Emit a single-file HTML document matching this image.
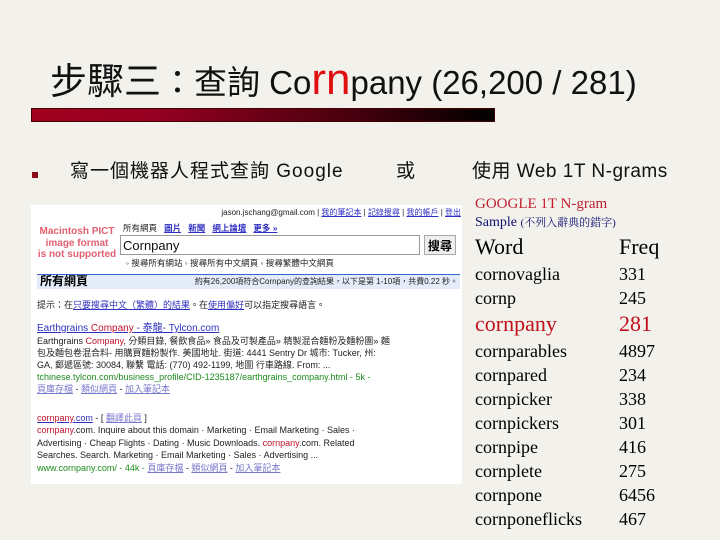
<!DOCTYPE html>
<html><head><meta charset="utf-8"><style>
*{margin:0;padding:0}
body{width:720px;height:540px;background:#f2f1ec;position:relative;overflow:hidden;font-family:"Liberation Sans","Noto Sans CJK TC",sans-serif}
.a{position:absolute;white-space:nowrap}
.s{font-family:"Liberation Serif","Noto Serif CJK SC",serif;color:#000}
.g{font-size:9px;color:#222;line-height:12px}
.lk{color:#3030c0;text-decoration:underline}
.lk2{color:#7777cc;text-decoration:underline}
.gr{color:#1c8a1c}
.rd{color:#c0102a}
</style></head><body>
<div class="a" style="left:50px;top:58px;font-size:33px;line-height:44px;color:#111"><span style="font-size:37px">步驟三</span>：查詢 Co<span style="color:#e01010;font-size:44px">rn</span>pany (26,200 / 281)</div>
<div class="a" style="left:31px;top:108px;width:462px;height:12px;background:linear-gradient(90deg,#a0001e 0%,#980022 25%,#500010 65%,#000 100%);border:1px solid #400"></div>
<div class="a" style="left:32px;top:172px;width:6px;height:6px;background:#8a0a1a"></div>
<div class="a" style="left:70px;top:161px;font-size:19px;letter-spacing:1px;line-height:22px;color:#111">寫一個機器人程式查詢 Google</div>
<div class="a" style="left:396px;top:161px;font-size:19px;line-height:22px;color:#111">或</div>
<div class="a" style="left:472px;top:161px;font-size:19px;letter-spacing:0.5px;line-height:22px;color:#111">使用 Web 1T N-grams</div>

<div class="a s" style="left:475px;top:194px;font-size:15px;line-height:20px;color:#c02030">GOOGLE 1T N-gram</div>
<div class="a s" style="left:475px;top:214px;font-size:14px;line-height:18px;color:#101070">Sample <span style="font-size:11px">(不列入辭典的錯字)</span></div>
<div class="a s" style="left:475px;top:233px;font-size:22px;line-height:28px">Word</div>
<div class="a s" style="left:619px;top:233px;font-size:22px;line-height:28px">Freq</div>
<div class="a s" style="left:475px;top:262px;font-size:18px;line-height:24px">cornovaglia<br>cornp</div>
<div class="a s" style="left:619px;top:262px;font-size:18px;line-height:24px">331<br>245</div>
<div class="a s" style="left:475px;top:311px;font-size:22px;line-height:26px;color:#c0101a">cornpany</div>
<div class="a s" style="left:619px;top:311px;font-size:22px;line-height:26px;color:#c0101a">281</div>
<div class="a s" style="left:475px;top:339px;font-size:18px;line-height:24px">cornparables<br>cornpared<br>cornpicker<br>cornpickers<br>cornpipe<br>cornplete<br>cornpone<br>cornponeflicks</div>
<div class="a s" style="left:619px;top:339px;font-size:18px;line-height:24px">4897<br>234<br>338<br>301<br>416<br>275<br>6456<br>467</div>

<div class="a" style="left:31px;top:205px;width:431px;height:279px;background:#fff"></div>
<div class="a g" style="right:259px;top:207px;font-size:8px">jason.jschang@gmail.com | <span class="lk">我的筆記本</span> | <span class="lk">記錄搜尋</span> | <span class="lk">我的帳戶</span> | <span class="lk">登出</span></div>
<div class="a" style="left:33px;top:226px;width:88px;text-align:center;font-size:10px;font-weight:bold;line-height:11.5px;color:#e06070">Macintosh PICT<br>image format<br>is not supported</div>
<div class="a g" style="left:123px;top:222px;font-size:8.5px">所有網頁 &nbsp; <b class="lk">圖片</b> &nbsp; <b class="lk">新聞</b> &nbsp; <b class="lk">網上論壇</b> &nbsp; <b class="lk">更多 »</b></div>
<div class="a" style="left:120px;top:235px;width:300px;height:20px;border:1px solid #999;background:#fff;font-size:13px;line-height:20px;color:#111;padding-left:2px;box-sizing:border-box">Cornpany</div>
<div class="a" style="left:424px;top:235px;width:32px;height:20px;border:1px solid #aaa;background:#eee;font-size:12px;font-weight:bold;line-height:20px;text-align:center;box-sizing:border-box">搜尋</div>
<div class="a g" style="left:126px;top:257px;font-size:8.5px">◦ 搜尋所有網站 ◦ 搜尋所有中文網頁 ◦ 搜尋繁體中文網頁</div>
<div class="a" style="left:37px;top:274px;width:423px;height:14px;background:#e5ecf9;border-top:1px solid #3366cc"></div>
<div class="a" style="left:40px;top:274px;font-size:12px;font-weight:bold;line-height:15px">所有網頁</div>
<div class="a g" style="right:262px;top:276px;font-size:8px">約有26,200項符合Cornpany的查詢結果，以下是第 1-10項，共費0.22 秒。</div>
<div class="a g" style="left:37px;top:299px">提示：在<span class="lk">只要搜尋中文（繁體）的結果</span>。在<span class="lk">使用偏好</span>可以指定搜尋語言。</div>
<div class="a g" style="left:37px;top:323px;font-size:10px"><span class="lk">Earthgrains <span class="rd">Company</span> - 泰龍- Tylcon.com</span></div>
<div class="a g" style="left:37px;top:335px">Earthgrains <span class="rd">Company</span>, 分類目錄, 餐飲食品» 食品及可製產品» 精製混合麵粉及麵粉團» 麵<br>包及麵包卷混合料- 用購買麵粉製作. 美國地址. 街道: 4441 Sentry Dr 城市: Tucker, 州:<br>GA, 郵遞區號: 30084, 聯繫 電話: (770) 492-1199, 地圖 行車路線. From: ...<br><span class="gr">tchinese.tylcon.com/business_profile/CID-1235187/earthgrains_company.html - 5k -</span><br><span class="lk2">頁庫存檔</span> - <span class="lk2">類似網頁</span> - <span class="lk2">加入筆記本</span></div>
<div class="a g" style="left:37px;top:412px"><span class="lk"><span class="rd">cornpany</span>.com</span> - [ <span class="lk2">翻譯此頁</span> ]</div>
<div class="a g" style="left:37px;top:424px;line-height:12.7px"><span class="rd">cornpany</span>.com. Inquire about this domain · Marketing · Email Marketing · Sales ·<br>Advertising · Cheap Flights · Dating · Music Downloads. <span class="rd">cornpany</span>.com. Related<br>Searches. Search. Marketing · Email Marketing · Sales · Advertising ...<br><span class="gr">www.cornpany.com/ - 44k -</span> <span class="lk2">頁庫存檔</span> - <span class="lk2">類似網頁</span> - <span class="lk2">加入筆記本</span></div>
</body></html>
